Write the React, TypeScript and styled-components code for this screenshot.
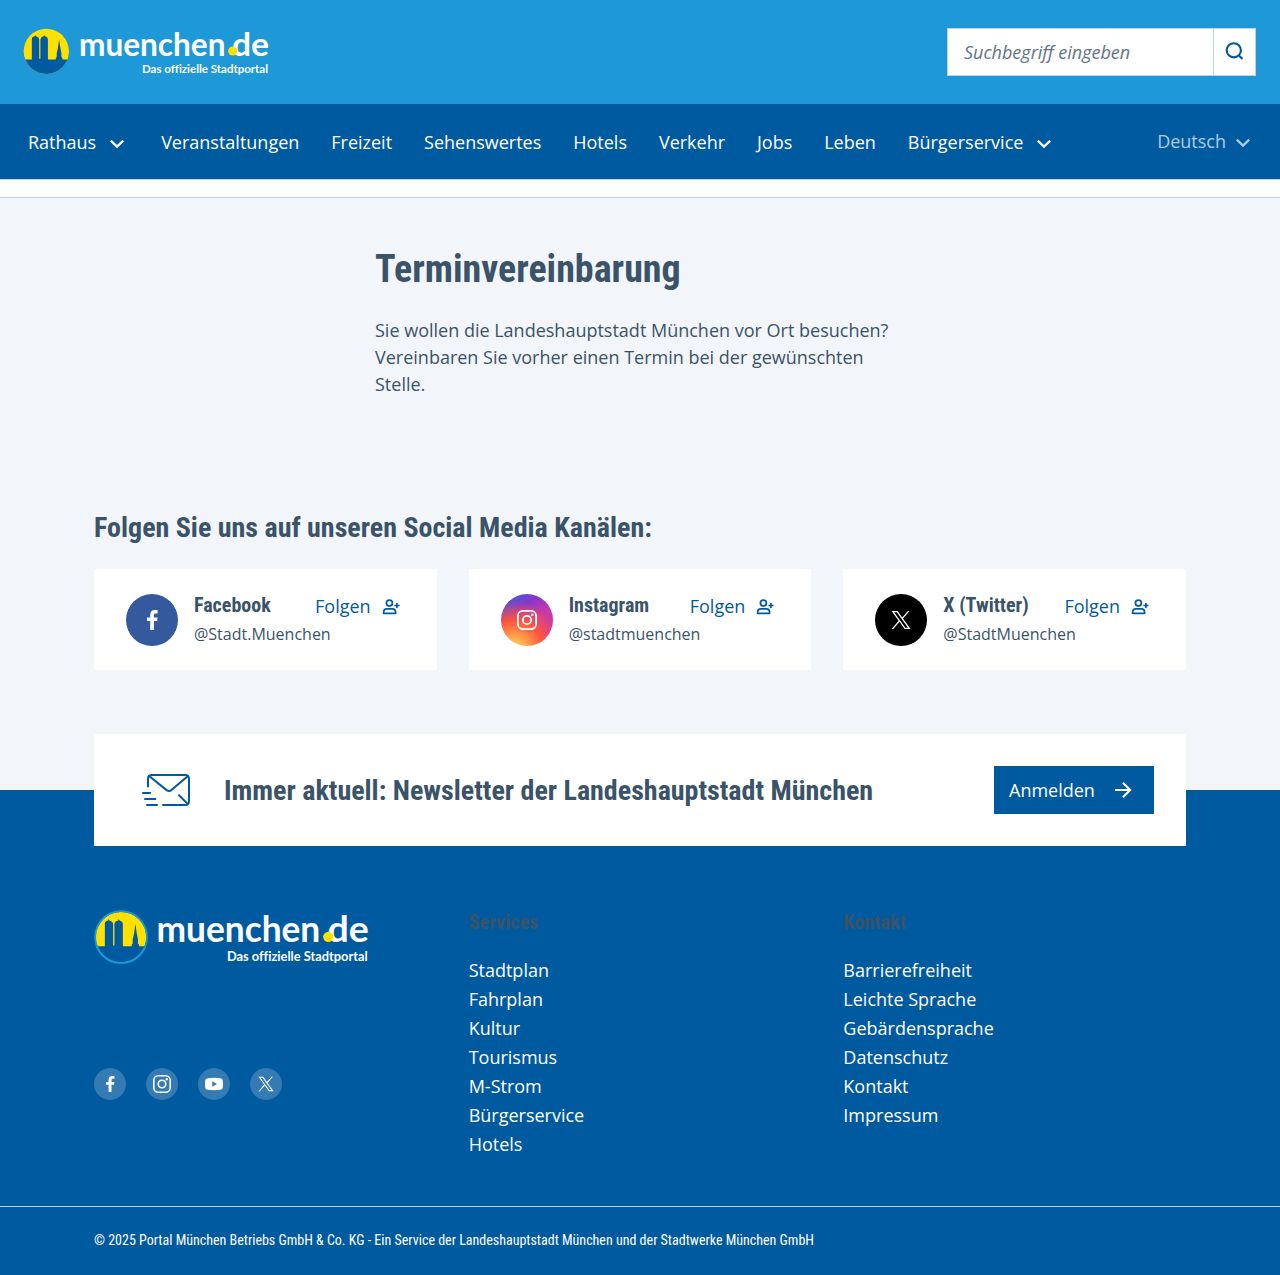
import React, { useId } from "react";
import styled, { createGlobalStyle } from "styled-components";

const c = {
  sky: "#1e98d7",
  blue: "#005a9f",
  pale: "#f2f5fa",
  line: "#bfd2e6",
  text: "#3a5368",
};
const condensed = `"Roboto Condensed", Roboto, "Liberation Sans Narrow", sans-serif`;

const Global = createGlobalStyle`
  * { box-sizing: border-box; }
  body { margin: 0; background: #fff; color: ${c.text}; font: 18px/27px "Open Sans", "Noto Sans", sans-serif; }
  h1, h2, h3, p, ul { margin: 0; padding: 0; }
  ul { list-style: none; }
  a { color: inherit; text-decoration: none; }
  svg { display: block; flex: none; }
`;

const Header = styled.header`
  display: flex; align-items: center; justify-content: space-between;
  height: 104px; padding: 0 24px 0 23px; background: ${c.sky};
`;
const Search = styled.form`
  display: flex; width: 309px; height: 48px; background: #fff; border: 1px solid ${c.line};
`;
const SearchInput = styled.input`
  flex: 1; min-width: 0; border: 0; padding: 0 16px; background: none; outline: none;
  font: 18px "Open Sans", sans-serif; color: ${c.text};
  &::placeholder { color: #617586; font-style: italic; opacity: 1; }
`;
const SearchButton = styled.button`
  display: flex; align-items: center; justify-content: center; width: 42px; padding: 0 0 2px 0;
  border: 0; border-left: 1px solid ${c.line}; background: none; color: ${c.blue};
`;
const Nav = styled.nav`
  display: flex; align-items: center; justify-content: space-between;
  height: 75px; padding: 0 25px 0 28px; background: ${c.blue}; color: #fff;
`;
const NavList = styled.ul` display: flex; gap: 31.95px; padding-top: 2px; `;
const NavItem = styled.li` display: flex; align-items: center; gap: 9px; `;
const Language = styled.div` display: flex; align-items: center; gap: 5px; color: #b0cbe4; `;
const Strip = styled.div`
  height: 19px; background: #fff; border: solid ${c.line}; border-width: 1px 0;
`;
const Main = styled.main` height: 592px; background: ${c.pale}; padding-top: 47px; `;
const Intro = styled.section` width: 530px; margin: 0 auto; height: 263px; `;
const Title = styled.h1`
  font: bold 38px/48px ${condensed}; font-stretch: 75%; margin-bottom: 24px;
`;
const Container = styled.div` width: 1092px; margin: 0 auto; `;
const Heading = styled.h2` font: bold 28px/40px ${condensed}; font-stretch: 75%; `;
const Cards = styled.div`
  display: grid; grid-template-columns: repeat(3, 1fr); gap: 32px; margin-top: 21px;
`;
const Card = styled.article`
  display: flex; align-items: center; gap: 16px; height: 101px; padding: 0 32px; background: #fff;
`;
const Badge = styled.span<{ $bg: string; $size: number }>`
  display: flex; align-items: center; justify-content: center; flex: none; color: #fff;
  width: ${(p) => p.$size}px; height: ${(p) => p.$size}px; border-radius: 50%; background: ${(p) => p.$bg};
`;
const CardBody = styled.div` flex: 1; padding-bottom: 2px; `;
const CardTop = styled.div` display: flex; justify-content: space-between; height: 29px; `;
const Name = styled.h3` font: bold 20px/26px ${condensed}; font-stretch: 75%; `;
const Handle = styled.p` font-size: 16px; line-height: 24px; margin-top: 1px; `;
const Follow = styled.a`
  display: flex; align-items: center; gap: 10px; color: ${c.blue}; height: 29px; padding-right: 4px;
`;
const Footer = styled.footer` display: flow-root; height: 485px; background: ${c.blue}; color: #fff; `;
const Lift = styled(Container)` margin-top: -56px; `;
const Newsletter = styled.section`
  display: flex; align-items: center; height: 112px; padding: 0 32px 0 48px;
  background: #fff; color: ${c.text};
`;
const NewsTitle = styled(Heading)` flex: 1; margin-left: 34px; padding-top: 2px; `;
const Button = styled.a`
  display: flex; align-items: center; justify-content: space-between; width: 160px; height: 48px;
  padding: 0 21px 0 15px; background: ${c.blue}; color: #fff;
`;
const Columns = styled.div`
  display: grid; grid-template-columns: repeat(3, 1fr); gap: 32px; height: 360px; padding-top: 63px;
`;
const FootBrand = styled.div` padding: 1px 0 0 1px; `;
const Socials = styled.div` display: flex; gap: 20px; margin: 102px 0 0 -1px; `;
const FootHead = styled.h3`
  font: bold 20px/26px ${condensed}; font-stretch: 75%; letter-spacing: .1px; color: ${c.text};
  margin-bottom: 21px;
`;
const Links = styled.ul` line-height: 29px; `;
const Copyright = styled.div`
  border-top: 1px solid ${c.line}; padding-top: 23px; font: 14px/20px ${condensed}; font-stretch: 75%;
`;

const LogoText = styled.g`
  font-family: Lato, sans-serif; font-weight: 700; font-variant-ligatures: none; fill: #fff;
`;

function Logo({ width, ring }: { width: number; ring?: boolean }) {
  const id = useId();
  const shift = ring ? -1 : 0;
  return (
    <svg width={width} height={(width * 50) / 246} viewBox="0 0 246 50" overflow="visible">
      <defs>
        <clipPath id={id}><circle cx="23.3" cy="24.3" r="22.6" /></clipPath>
      </defs>
      <circle cx="23.3" cy="24.3" r="22.6" fill="#ffe100" />
      <path
        clipPath={`url(#${id})`}
        fill={c.blue}
        d="M0 32.5H8.8V12.5L9.2 10.6Q10.2 9.7 11.6 9.3L12.2 8L12.8 9.3Q14.6 9.7 15.5 10.8L16.2 12.5V31.8H17.4V12.5L18.2 10.6Q19.2 9.7 20.6 9.3L21.2 8L21.8 9.3Q23.6 9.7 24.4 10.8L24.9 12.5V32.5H32.8V31L33.7 30V26.4L35 20.5L36.1 12.4L37.3 20.5L38.4 26V30L39.4 31V32.5H50V50H0Z"
      />
      {ring && <circle cx="23.3" cy="24.3" r="23.2" fill="none" stroke={c.sky} strokeWidth="1.6" />}
      <g transform={`translate(${shift} 0)`}>
        <LogoText>
          <text x="56" y="28.8" fontSize="32" textLength="146.5" lengthAdjust="spacingAndGlyphs">muenchen</text>
          <text x="209" y="28.8" fontSize="32" textLength="37" lengthAdjust="spacingAndGlyphs">de</text>
          <text x="119" y="45.7" fontSize="11.8" textLength="126" lengthAdjust="spacingAndGlyphs">Das offizielle Stadtportal</text>
        </LogoText>
        <circle cx="209.7" cy="24" r="4.6" fill="#ffe100" />
      </g>
    </svg>
  );
}

const Chevron = () => (
  <svg width="24" height="24" viewBox="0 0 24 24" fill="none" stroke="currentColor" strokeWidth="2.2">
    <path d="M5.8 9.6 12 15.6 18.2 9.6" />
  </svg>
);

const FollowIcon = () => (
  <svg width="20" height="20" viewBox="0 0 20 20" fill="none" stroke="currentColor" strokeWidth="1.7">
    <circle cx="8.4" cy="7.1" r="3" />
    <path d="M2.6 17.3V16.5Q2.6 12.9 6 12.9H11.2Q14.6 12.9 14.6 16.5V17.3Z" strokeLinejoin="round" />
    <path d="M15.9 7V12M13.4 9.5H18.6" />
  </svg>
);

type Network = "facebook" | "instagram" | "youtube" | "x";

function SocialIcon({ name, size = 20 }: { name: Network; size?: number }) {
  return (
    <svg width={size} height={size} viewBox="0 0 20 20" fill="currentColor">
      {name === "facebook" && (
        <path d="M8.2 20V10.9H5V7.6H8.2V5.2C8.2 1.8 9.8 0 12.9 0H15.6V3.4H13.7C12.3 3.4 11.9 4 11.9 5.3V7.6H15.5L15.1 10.9H11.9V20Z" />
      )}
      {name === "instagram" && (
        <>
          <rect x=".9" y=".9" width="18.2" height="18.2" rx="5" fill="none" stroke="currentColor" strokeWidth="1.8" />
          <circle cx="10" cy="10" r="4.2" fill="none" stroke="currentColor" strokeWidth="1.8" />
          <circle cx="15.3" cy="4.7" r="1.3" />
        </>
      )}
      {name === "youtube" && (
        <path
          fillRule="evenodd"
          d="M3 3.5Q10 2.7 17 3.5Q19.6 3.8 19.8 6.5Q20.2 10 19.8 13.5Q19.6 16.2 17 16.5Q10 17.3 3 16.5Q.4 16.2 .2 13.5Q-.2 10 .2 6.5Q.4 3.8 3 3.5ZM8 7V13L13.3 10Z"
        />
      )}
      {name === "x" && (
        <path
          fillRule="evenodd"
          d="M.6 1H6.5L11.2 7.5 16.9 1H18.6L12 8.6 19.6 19H13.6L8.5 11.8 2.3 19H.6L7.7 10.7ZM3.1 2.3 14.3 17.7H17L5.8 2.3Z"
        />
      )}
    </svg>
  );
}

const NewsIcon = () => (
  <svg width="48" height="34" viewBox="0 0 48 34" fill="none" stroke={c.blue} strokeWidth="2" strokeLinecap="round" strokeLinejoin="round">
    <path d="M6 13.5V6Q6 2 10 2H43Q47 2 47 6V28Q47 32 43 32H21" />
    <path d="M7.4 3.2 24.6 17.1Q27 18.9 29.4 17.1L45.7 3.2M37 22.2 45.2 30.4" />
    <path d="M1 20H8.2M3 26H13.4M5 32H15" />
  </svg>
);

const nav = ["Rathaus", "Veranstaltungen", "Freizeit", "Sehenswertes", "Hotels", "Verkehr", "Jobs", "Leben", "Bürgerservice"];
const channels: { icon: Network; name: string; handle: string; bg: string }[] = [
  { icon: "facebook", name: "Facebook", handle: "@Stadt.Muenchen", bg: "#34599d" },
  {
    icon: "instagram", name: "Instagram", handle: "@stadtmuenchen",
    bg: "radial-gradient(circle at 27% 105%, #ffdc6b 0, #ffc453 8%, #ff543e 42%, rgba(255,84,62,0) 72%), linear-gradient(145deg, #3f5fdc 8%, #8238cc 30%, #c837ab 54%)",
  },
  { icon: "x", name: "X (Twitter)", handle: "@StadtMuenchen", bg: "#000" },
];
const footerNetworks: { icon: Network; size: number }[] = [
  { icon: "facebook", size: 16 },
  { icon: "instagram", size: 18 },
  { icon: "youtube", size: 18 },
  { icon: "x", size: 16 },
];
const services = ["Stadtplan", "Fahrplan", "Kultur", "Tourismus", "M-Strom", "Bürgerservice", "Hotels"];
const contact = ["Barrierefreiheit", "Leichte Sprache", "Gebärdensprache", "Datenschutz", "Kontakt", "Impressum"];

function LinkColumn({ title, items }: { title: string; items: string[] }) {
  return (
    <div>
      <FootHead>{title}</FootHead>
      <Links>{items.map((t) => <li key={t}><a href="#">{t}</a></li>)}</Links>
    </div>
  );
}

export default function App() {
  return (
    <>
      <Global />
      <Header>
        <Logo width={246} />
        <Search>
          <SearchInput placeholder="Suchbegriff eingeben" />
          <SearchButton type="button" aria-label="Suchen">
            <svg width="20" height="20" viewBox="0 0 20 20" fill="none" stroke="currentColor" strokeWidth="2.1">
              <circle cx="8.8" cy="9.3" r="7.1" />
              <path d="M13.7 14.2 17.5 18" />
            </svg>
          </SearchButton>
        </Search>
      </Header>
      <Nav>
        <NavList>
          {nav.map((t) => (
            <NavItem key={t}>
              <a href="#">{t}</a>
              {(t === "Rathaus" || t === "Bürgerservice") && <Chevron />}
            </NavItem>
          ))}
        </NavList>
        <Language>Deutsch<Chevron /></Language>
      </Nav>
      <Strip />
      <Main>
        <Intro>
          <Title>Terminvereinbarung</Title>
          <p>Sie wollen die Landeshauptstadt München vor Ort besuchen? Vereinbaren Sie vorher einen Termin bei der gewünschten Stelle.</p>
        </Intro>
        <Container>
          <Heading>Folgen Sie uns auf unseren Social Media Kanälen:</Heading>
          <Cards>
            {channels.map((ch) => (
              <Card key={ch.name}>
                <Badge $bg={ch.bg} $size={52}><SocialIcon name={ch.icon} /></Badge>
                <CardBody>
                  <CardTop>
                    <Name>{ch.name}</Name>
                    <Follow href="#">Folgen<FollowIcon /></Follow>
                  </CardTop>
                  <Handle>{ch.handle}</Handle>
                </CardBody>
              </Card>
            ))}
          </Cards>
        </Container>
      </Main>
      <Footer>
        <Lift>
          <Newsletter>
            <NewsIcon />
            <NewsTitle>Immer aktuell: Newsletter der Landeshauptstadt München</NewsTitle>
            <Button href="#">
              Anmelden
              <svg width="20" height="20" viewBox="0 0 20 20" fill="none" stroke="currentColor" strokeWidth="2.1">
                <path d="M2 10H16.6M9.9 2.7 17.2 10 9.9 17.3" />
              </svg>
            </Button>
          </Newsletter>
          <Columns>
            <FootBrand>
              <Logo width={275} ring />
              <Socials>
                {footerNetworks.map((n) => (
                  <Badge key={n.icon} $bg="rgba(255,255,255,.2)" $size={32}><SocialIcon name={n.icon} size={n.size} /></Badge>
                ))}
              </Socials>
            </FootBrand>
            <LinkColumn title="Services" items={services} />
            <LinkColumn title="Kontakt" items={contact} />
          </Columns>
        </Lift>
        <Copyright>
          <Container>© 2025 Portal München Betriebs GmbH &amp; Co. KG - Ein Service der Landeshauptstadt München und der Stadtwerke München GmbH</Container>
        </Copyright>
      </Footer>
    </>
  );
}
